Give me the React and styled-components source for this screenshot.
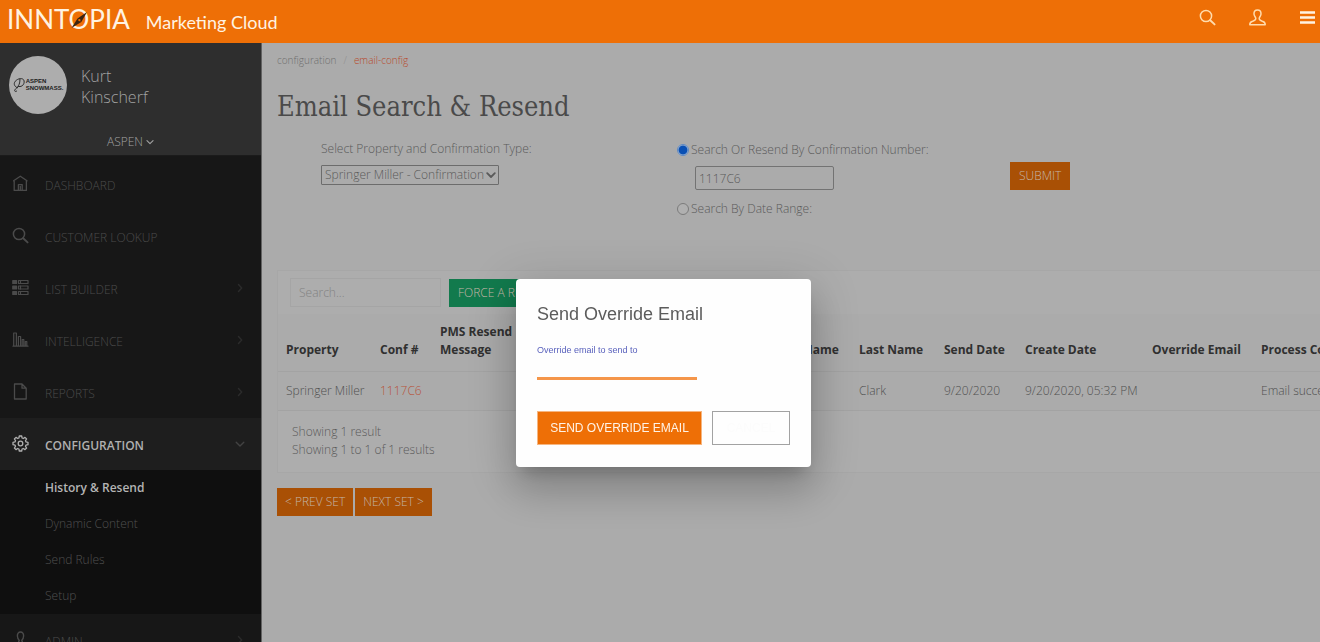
import React from "react";
import styled, { createGlobalStyle, css } from "styled-components";

const Global = createGlobalStyle`
  *, *::before, *::after { box-sizing: border-box; }
  html, body { margin: 0; height: 100%; }
  body {
    background: #ababab;
    color: #5a5a5a;
    font: 300 12px/18px "Open Sans", "Noto Sans", sans-serif;
    overflow: hidden;
  }
  #root { height: 100%; }
  button, input, select { font: inherit; color: inherit; margin: 0; }
  a { color: inherit; text-decoration: none; }
  ul { list-style: none; margin: 0; padding: 0; }
`;

const Page = styled.div`
  display: flex;
  flex-direction: column;
  height: 100%;
`;

const TopBar = styled.header`
  display: flex;
  flex: none;
  justify-content: space-between;
  height: 43px;
  padding-left: 7px;
  background: #ee6f06;
  color: #fff3e2;
`;

const Brand = styled.a`
  display: flex;
  align-items: baseline;
  gap: 16px;
  font-family: Lato, sans-serif;
  line-height: 38px;
`;

const Wordmark = styled.span`
  font-size: 26px;
  font-weight: 400;
`;

const CompassO = styled.span`
  position: relative;
  svg {
    position: absolute;
    left: 0;
    top: 6px;
    width: 21px;
    height: 22px;
  }
`;

const Product = styled.span`
  font-size: 18px;
  font-weight: 400;
`;

const Actions = styled.div`
  display: flex;
  margin-right: -12px;
`;

const IconButton = styled.button`
  display: flex;
  align-items: center;
  justify-content: center;
  width: 50px;
  height: 34px;
  padding: 0;
  border: 0;
  background: none;
  color: #ffdcae;
  &:last-child { color: #fff3e2; }
`;

const Body = styled.div`
  display: flex;
  flex: 1;
  min-height: 0;
`;

const Sidebar = styled.aside`
  flex: none;
  width: 262px;
  border-right: 1px solid #626262;
  background: #171717;
  overflow: hidden;
`;

const Profile = styled.section`
  padding: 13px 9px 3px;
  border-bottom: 1px solid #1b1b1b;
  background: #2e2e2e;
  color: #a2a2a2;
`;

const ProfileHead = styled.div`
  display: flex;
  gap: 14px;
`;

const Avatar = styled.div`
  display: flex;
  align-items: center;
  justify-content: center;
  width: 58px;
  height: 58px;
  border-radius: 50%;
  background: #adadad;
  color: #202020;
  font: 700 6px/7px "Liberation Sans", Arial, sans-serif;
  svg { flex: none; }
`;

const UserName = styled.div`
  padding-top: 10px;
  font-size: 16px;
  line-height: 21px;
`;

const AccountButton = styled.button`
  display: flex;
  align-items: center;
  gap: 3px;
  margin: 18px auto 0;
  padding: 0;
  border: 0;
  background: none;
  line-height: 20px;
`;

const Nav = styled.nav`
  padding-top: 2px;
`;

const NavLink = styled.a`
  display: flex;
  align-items: center;
  height: 52px;
  padding: 3px 16px 0 12px;
  color: #4b4b4b;
  svg { flex: none; margin-bottom: 4px; }
  ${(p) => p.$active && css`
    background: #1e1e1e;
    color: #b0b0b0;
    font-weight: 600;
  `}
`;

const NavText = styled.span`
  flex: 1;
  padding-left: 16px;
`;

const Arrow = styled.span`
  display: flex;
  color: ${(p) => (p.$active ? "#424242" : "#2b2b2b")};
`;

const SubNav = styled.ul`
  background: #0f0f0f;
`;

const SubLink = styled.a`
  display: block;
  padding-left: 45px;
  color: ${(p) => (p.$active ? "#b4b4b4" : "#4f4f4f")};
  font-weight: ${(p) => (p.$active ? 600 : 300)};
  line-height: 36px;
`;

const Main = styled.main`
  flex: 1;
  min-width: 0;
  padding: 8px 0 0 15px;
  overflow: hidden;
`;

const Breadcrumb = styled.nav`
  display: flex;
  gap: 7px;
  color: #6e6e6e;
  font-size: 10px;
  line-height: 18px;
`;

const Crumb = styled.a`
  color: ${(p) => (p.$current ? "#b8492a" : "inherit")};
`;

const Slash = styled.span`
  color: #8e8e8e;
`;

const Title = styled.h1`
  margin: 18px 0 13px;
  color: #4a4a4a;
  font: 400 27px/40px "DejaVu Serif Condensed", "DejaVu Serif", serif;
`;

const SearchForm = styled.form`
  display: grid;
  grid-template-columns: 356fr 333fr 310fr;
  min-height: 130px;
  padding-left: 44px;
`;

const Field = styled.div`
  display: flex;
  flex-direction: column;
  align-items: flex-start;
  gap: 7px;
`;

const SelectWrap = styled.span`
  display: grid;
  align-items: center;
  svg { grid-area: 1 / 1; justify-self: end; margin-right: 3px; pointer-events: none; }
`;

const Select = styled.select`
  grid-area: 1 / 1;
  width: 178px;
  height: 20px;
  padding: 0 8px 0 3px;
  border: 1px solid #6c6c6c;
  border-radius: 1px;
  background: transparent;
  appearance: none;
`;

const RadioLabel = styled.label`
  display: flex;
  align-items: center;
  gap: 2px;
  margin-top: 1px;
`;

const Radio = styled.input`
  width: 12px;
  height: 12px;
  margin: 0;
  border: 1px solid #7b7b7b;
  border-radius: 50%;
  background: #b0b0b0;
  appearance: none;
  &:checked {
    border-color: #5f8ac4;
    background: radial-gradient(circle, #0a50b4 0 4px, #a9bcd6 5px);
  }
`;

const ConfirmationInput = styled.input`
  width: 139px;
  height: 24px;
  margin: 0 0 2px 18px;
  padding: 0 3px;
  border: 1px solid #737373;
  border-radius: 2px;
  background: transparent;
`;

const Button = styled.button`
  height: 28px;
  padding: 0 ${(p) => p.$pad || 9}px;
  border: 0;
  background: ${(p) => (p.$green ? "#127a4d" : "#a95005")};
  color: #c4b5a8;
  white-space: nowrap;
`;

const SubmitCell = styled.div`
  padding-top: 22px;
`;

const Results = styled.section`
  border: 1px solid #a7a7a7;
  border-right: 0;
  background: #adadad;
`;

const Tools = styled.div`
  display: flex;
  align-items: center;
  gap: 8px;
  height: 43px;
  padding-left: 12px;
`;

const SearchInput = styled.input`
  width: 151px;
  height: 29px;
  padding: 0 8px;
  border: 1px solid #a5a5a5;
  background: transparent;
  &::placeholder { color: #828282; opacity: 1; }
`;

const TableClip = styled.div`
  overflow: hidden;
`;

const Table = styled.table`
  width: 1180px;
  border-collapse: collapse;
  table-layout: fixed;
  background: #ababab;
  text-align: left;
`;

const Th = styled.th`
  height: 57px;
  padding: 0 0 12px 8px;
  border-bottom: 1px solid #a3a3a3;
  color: #303030;
  font-weight: 700;
  vertical-align: bottom;
`;

const Td = styled.td`
  height: 39px;
  padding: 0 0 0 8px;
  border-bottom: 1px solid #a3a3a3;
  color: #505050;
  white-space: nowrap;
`;

const ConfLink = styled.a`
  color: #b8533a;
`;

const Summary = styled.div`
  padding: 12px 14px 13px;
  p { margin: 0; }
`;

const Pager = styled.div`
  display: flex;
  gap: 2px;
  margin-top: 15px;
`;

const Overlay = styled.div`
  position: fixed;
  inset: 0;
  display: flex;
  align-items: center;
  justify-content: center;
  padding: 104px 0 0 7px;
`;

const Dialog = styled.div`
  width: 295px;
  padding: 23px 21px 22px;
  border-radius: 4px;
  background: #fefefe;
  box-shadow: 0 11px 15px -7px rgba(0, 0, 0, 0.2),
    0 24px 38px 3px rgba(0, 0, 0, 0.14), 0 9px 46px 8px rgba(0, 0, 0, 0.12);
  color: #5c5c5c;
  font-family: "Liberation Sans", Arial, sans-serif;
  font-weight: 400;
`;

const DialogTitle = styled.h2`
  margin: 0 0 16px;
  font-size: 18px;
  font-weight: 400;
  line-height: 24px;
`;

const DialogLabel = styled.label`
  display: block;
  color: #5a62bd;
  font-size: 9px;
  line-height: 16px;
`;

const DialogInput = styled.input`
  display: block;
  width: 160px;
  height: 22px;
  padding: 0;
  border: 0;
  border-bottom: 3px solid #f5964a;
  background: transparent;
  outline: none;
`;

const DialogActions = styled.div`
  display: flex;
  align-items: center;
  gap: 10px;
  margin-top: 31px;
`;

const DialogButton = styled.button`
  flex: ${(p) => (p.$primary ? "1" : "0 0 78px")};
  height: 34px;
  padding: 0;
  border: 1px solid ${(p) => (p.$primary ? "#f6b57f" : "#a2a2a2")};
  background: ${(p) => (p.$primary ? "#ee6f06" : "#fefefe")};
  color: ${(p) => (p.$primary ? "#fff3e6" : "#fcfcfc")};
  white-space: nowrap;
`;

const stroke = {
  fill: "none",
  stroke: "currentColor",
  strokeLinecap: "round",
  strokeLinejoin: "round",
};

const SearchIcon = ({ size = 17, weight = 1.5 }) => (
  <svg width={size} height={size} viewBox="0 0 17 17" {...stroke} strokeWidth={weight}>
    <circle cx="7" cy="7" r="5.6" />
    <path d="M11.2 11.2 15.6 15.4" strokeWidth={weight + 0.4} />
  </svg>
);

const UserIcon = ({ size = 17 }) => (
  <svg width={size} height={size} viewBox="0 0 17 17" {...stroke} strokeWidth="1.5">
    <path d="M8.500 1C6 1 4.900 2.500 5 5C5.200 7.400 6.800 8 6.800 9.500C6.800 11.500 5 11.800 3 12.500C1.300 13.100 .8 14 .8 15.800H16.200C16.200 14 15.700 13.100 14 12.500C12 11.800 10.200 11.500 10.200 9.500C10.200 8 11.800 7.400 12 5C12.100 2.500 11 1 8.500 1Z" />
  </svg>
);

const MenuIcon = () => (
  <svg width="15" height="13" viewBox="0 0 15 13" {...stroke} strokeLinecap="butt" strokeWidth="2.4">
    <path d="M0 1.500H15M0 6.500H15M0 11.500H15" />
  </svg>
);

const HomeIcon = () => (
  <svg width="17" height="17" viewBox="0 0 17 17" {...stroke} strokeWidth="1.3">
    <path d="M2.200 6.200V15.400H14.400V6.200M1.600 5.800 8.300 1.200 15 5.800" />
    <path d="M6.400 15.400V9.600H10.200V15.400" />
    <path d="M8.300 11.500V15" />
  </svg>
);

const ListIcon = () => (
  <svg width="17" height="17" viewBox="0 0 17 17" {...stroke} strokeWidth="1.2">
    <path d="M.8 1.500H4.500V4.500H.8ZM.8 7H4.500V10H.8ZM.8 12.500H4.500V15.500H.8Z" fill="currentColor" />
    <path d="M6.500 1.500H16V4.500H6.500ZM6.500 7H16V10H6.500ZM6.500 12.500H16V15.500H6.500Z" />
    <path d="M8.500 1.500V4.500M8.500 7V10M8.500 12.500V15.500" />
  </svg>
);

const ChartIcon = () => (
  <svg width="17" height="17" viewBox="0 0 17 17" {...stroke} strokeWidth="1.200">
    <path d="M1 15.200H16M1.700 15V2H4.400V15M6.400 15V5.500H8.600V15M10.200 15V8.500H11.800V15M13.300 15V10.500H14.800V15" />
  </svg>
);

const FileIcon = () => (
  <svg width="17" height="17" viewBox="0 0 17 17" {...stroke} strokeWidth="1.300">
    <path d="M2.500 1H10L14.200 5.200V16H2.500ZM10 1V5.200H14.200" />
  </svg>
);

const GearIcon = () => (
  <svg width="17" height="17" viewBox="0 0 17 17" {...stroke} strokeWidth="1.300">
    <path d="M7.300 1H9.700L10.100 3L11.300 3.500L13 2.400L14.600 4L13.500 5.700L14 6.900L16 7.300V9.700L14 10.100L13.500 11.300L14.600 13L13 14.600L11.300 13.500L10.100 14L9.700 16H7.300L6.900 14L5.700 13.500L4 14.600L2.400 13L3.500 11.300L3 10.100L1 9.700V7.300L3 6.900L3.500 5.700L2.400 4L4 2.400L5.700 3.500L6.900 3Z" />
    <circle cx="8.500" cy="8.500" r="2.300" />
  </svg>
);

const AdminIcon = () => (
  <svg width="17" height="17" viewBox="0 0 17 17" {...stroke} strokeWidth="1.400">
    <path d="M8.500 1C6.500 1 5.300 2.500 5.400 5C5.500 7.200 6.300 8.500 7.200 9.200L6.500 11.500L3 13V16H14V13L10.500 11.500L9.800 9.200C10.700 8.500 11.500 7.200 11.600 5C11.700 2.500 10.500 1 8.500 1Z" />
  </svg>
);

const Chevron = ({ down, width = 10, weight = 1.4 }) => (
  <svg width={width} height={width} viewBox="0 0 10 10" {...stroke} strokeWidth={weight}>
    <path d={down ? "M1.200 3.200 5 7 8.800 3.200" : "M3.500 1.500 6.700 5 3.500 8.500"} />
  </svg>
);

const NAV = [
  { label: "DASHBOARD", icon: HomeIcon },
  { label: "CUSTOMER LOOKUP", icon: SearchIcon },
  { label: "LIST BUILDER", icon: ListIcon, arrow: true },
  { label: "INTELLIGENCE", icon: ChartIcon, arrow: true },
  { label: "REPORTS", icon: FileIcon, arrow: true },
  {
    label: "CONFIGURATION",
    icon: GearIcon,
    arrow: true,
    active: true,
    children: ["History & Resend", "Dynamic Content", "Send Rules", "Setup"],
  },
  { label: "ADMIN", icon: AdminIcon, arrow: true },
];

const COLUMNS = [
  { title: "Property", width: 94, value: "Springer Miller" },
  { title: "Conf #", width: 60, value: <ConfLink href="#conf">1117C6</ConfLink> },
  { title: "PMS Resend Message", width: 100 },
  { title: "", width: 233 },
  { title: "First Name", width: 86 },
  { title: "Last Name", width: 85, value: "Clark" },
  { title: "Send Date", width: 81, value: "9/20/2020" },
  { title: "Create Date", width: 127, value: "9/20/2020, 05:32 PM" },
  { title: "Override Email", width: 109 },
  { title: "Process Comments", width: 205, value: "Email successfully sent" },
];

export default function App() {
  return (
    <>
      <Global />
      <Page>
        <TopBar>
          <Brand href="#home">
            <Wordmark>
              INNT
              <CompassO>
                O
                <svg viewBox="0 0 20 22" aria-hidden="true">
                  <path d="M17.500 3 11.800 13 8 9.500Z" fill="#3b2411" />
                  <path d="M2 19 11.800 13 8 9.500Z" fill="#3b2411" />
                  <circle cx="9.900" cy="11.200" r="1.100" fill="#ee6f06" />
                </svg>
              </CompassO>
              PIA
            </Wordmark>
            <Product>Marketing Cloud</Product>
          </Brand>
          <Actions>
            <IconButton aria-label="Search"><SearchIcon /></IconButton>
            <IconButton aria-label="Account"><UserIcon /></IconButton>
            <IconButton aria-label="Menu"><MenuIcon /></IconButton>
          </Actions>
        </TopBar>
        <Body>
          <Sidebar>
            <Profile>
              <ProfileHead>
                <Avatar>
                  <svg width="13" height="18" viewBox="0 0 14 18" {...stroke} strokeWidth="1">
                    <path d="M4 15.500C2 17 1 15 2.500 13.500C5 11.500 7.500 9 7.500 3M5 12C1 11 0 6.500 3.500 4C7 1 12.500 1.500 12 6C11.700 9.500 8.500 11.500 5.500 10.500" />
                  </svg>
                  <span>ASPEN<br />SNOWMASS.</span>
                </Avatar>
                <UserName>Kurt<br />Kinscherf</UserName>
              </ProfileHead>
              <AccountButton>ASPEN <Chevron down width={8} /></AccountButton>
            </Profile>
            <Nav>
              {NAV.map(({ label, icon: Icon, arrow, active, children }) => (
                <React.Fragment key={label}>
                  <NavLink href="#nav" $active={active}>
                    <Icon />
                    <NavText>{label}</NavText>
                    {arrow && <Arrow $active={active}><Chevron down={active} /></Arrow>}
                  </NavLink>
                  {children && (
                    <SubNav>
                      {children.map((item, i) => (
                        <li key={item}><SubLink href="#sub" $active={i === 0}>{item}</SubLink></li>
                      ))}
                    </SubNav>
                  )}
                </React.Fragment>
              ))}
            </Nav>
          </Sidebar>
          <Main>
            <Breadcrumb>
              <Crumb href="#configuration">configuration</Crumb>
              <Slash>/</Slash>
              <Crumb href="#email" $current>email-config</Crumb>
            </Breadcrumb>
            <Title>Email Search &amp; Resend</Title>
            <SearchForm onSubmit={(e) => e.preventDefault()}>
              <Field>
                <label htmlFor="type">Select Property and Confirmation Type:</label>
                <SelectWrap>
                  <Select id="type">
                    <option>Springer Miller - Confirmation</option>
                  </Select>
                  <Chevron down weight={1.8} />
                </SelectWrap>
              </Field>
              <Field>
                <RadioLabel>
                  <Radio type="radio" name="mode" defaultChecked />
                  Search Or Resend By Confirmation Number:
                </RadioLabel>
                <ConfirmationInput aria-label="Confirmation number" defaultValue="1117C6" />
                <RadioLabel>
                  <Radio type="radio" name="mode" />
                  Search By Date Range:
                </RadioLabel>
              </Field>
              <SubmitCell><Button type="submit">SUBMIT</Button></SubmitCell>
            </SearchForm>
            <Results>
              <Tools>
                <SearchInput aria-label="Search results" placeholder="Search..." />
                <Button $green>FORCE A RESEND</Button>
              </Tools>
              <TableClip>
                <Table>
                  <colgroup>
                    {COLUMNS.map((c, i) => <col key={i} width={c.width} />)}
                  </colgroup>
                  <thead>
                    <tr>{COLUMNS.map((c, i) => <Th key={i}>{c.title}</Th>)}</tr>
                  </thead>
                  <tbody>
                    <tr>{COLUMNS.map((c, i) => <Td key={i}>{c.value}</Td>)}</tr>
                  </tbody>
                </Table>
              </TableClip>
              <Summary>
                <p>Showing 1 result</p>
                <p>Showing 1 to 1 of 1 results</p>
              </Summary>
            </Results>
            <Pager>
              <Button $pad={8}>&lt; PREV SET</Button>
              <Button $pad={8}>NEXT SET &gt;</Button>
            </Pager>
          </Main>
        </Body>
      </Page>
      <Overlay>
        <Dialog role="dialog" aria-modal="true" aria-labelledby="dialog-title">
          <DialogTitle id="dialog-title">Send Override Email</DialogTitle>
          <DialogLabel htmlFor="override">Override email to send to</DialogLabel>
          <DialogInput id="override" type="email" />
          <DialogActions>
            <DialogButton $primary>SEND OVERRIDE EMAIL</DialogButton>
            <DialogButton>CANCEL</DialogButton>
          </DialogActions>
        </Dialog>
      </Overlay>
    </>
  );
}
